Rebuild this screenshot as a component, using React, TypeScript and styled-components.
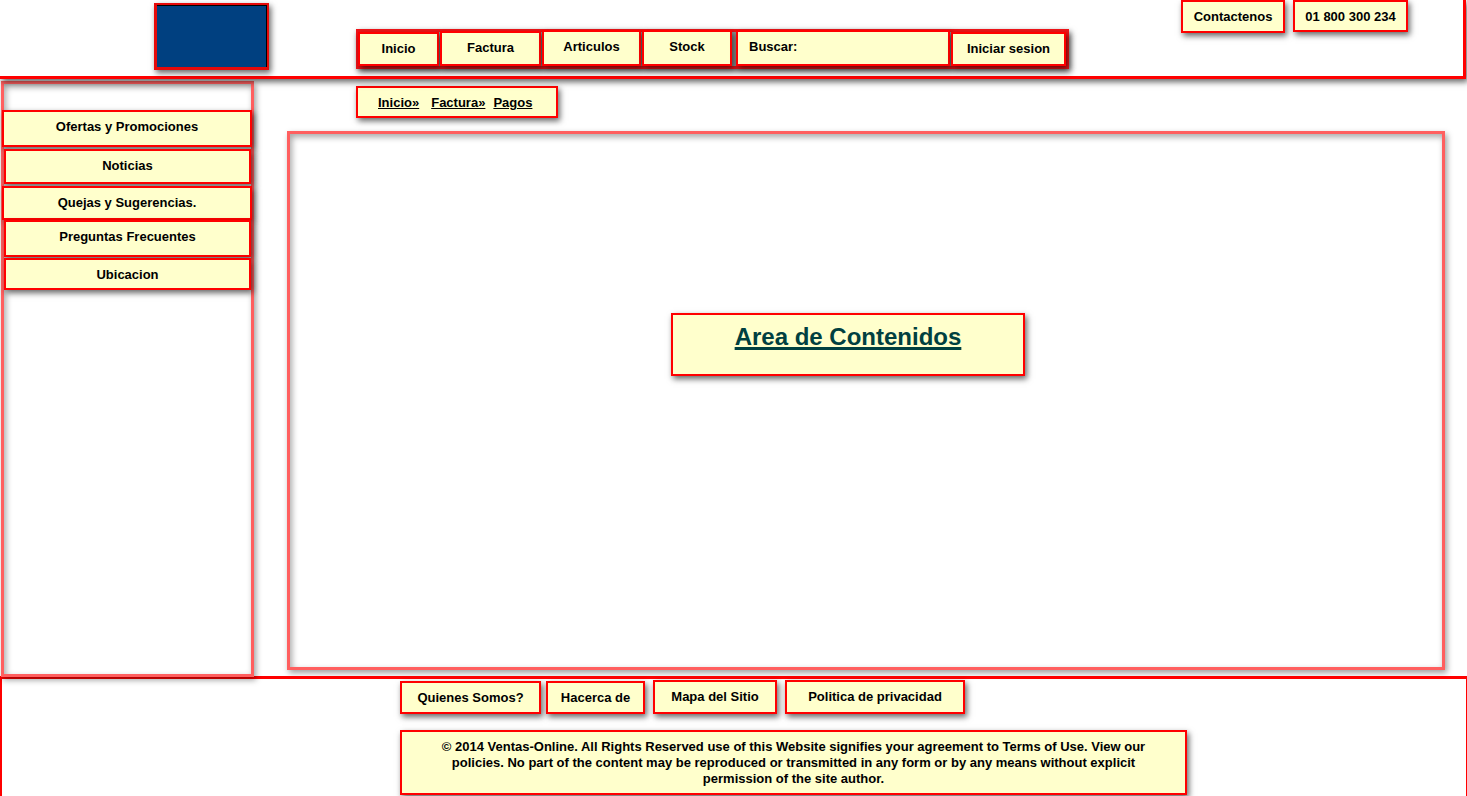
import React from "react";
import styled, { createGlobalStyle, css } from "styled-components";

const red = "#ff0000";
const cream = "#ffffcc";
const shadow = "2px 3px 6px rgba(0, 0, 0, 0.6)";

const GlobalStyle = createGlobalStyle`
  *, *::before, *::after { box-sizing: border-box; }
  body {
    margin: 0;
    background: #ffffff;
    color: #000000;
    font: bold 13px/16px "Liberation Sans", Arial, sans-serif;
  }
  ul, ol { list-style: none; margin: 0; padding: 0; }
`;

const Page = styled.div`
  display: flex;
  flex-direction: column;
  min-height: 100vh;
`;

const note = css`
  border: 2px solid ${red};
  background: ${cream};
  box-shadow: ${shadow};
  color: inherit;
  font: inherit;
`;

const NoteButton = styled.button<{ $width?: number; $height: number }>`
  ${note}
  display: flex;
  justify-content: center;
  align-items: flex-start;
  flex: none;
  width: ${(p) => (p.$width ? `${p.$width}px` : "100%")};
  height: ${(p) => p.$height}px;
  padding: 7px 0 0;
  white-space: nowrap;
  cursor: pointer;
`;

const Header = styled.header`
  position: relative;
  z-index: 1;
  display: flex;
  align-items: flex-start;
  min-height: 79px;
  margin-right: 1px;
  padding: 0 55px 0 154px;
  border: solid ${red};
  border-width: 0 3px 3px 0;
  box-shadow: ${shadow};
`;

const Logo = styled.div`
  flex: none;
  width: 115px;
  height: 67px;
  margin-top: 3px;
  border: solid #e60a0a;
  border-width: 2px 2px 3px 3px;
  background: #004080;
  box-shadow: inset -1px 1px 0 #000000, ${shadow};
`;

const Nav = styled.nav`
  flex: none;
  height: 40px;
  margin: 29px 0 0 87px;
  border: 3px solid #f01418;
  background: #999999;
  box-shadow: ${shadow};
`;

const NavBar = styled.div`
  display: flex;
  align-items: flex-end;
  gap: 1px;
  height: 36px;
  margin: -2px 0 0 -1px;
`;

const Search = styled.label`
  ${note}
  display: flex;
  align-items: flex-start;
  gap: 4px;
  width: 214px;
  height: 36px;
  margin-left: 3px;
  padding: 7px 11px 0;
`;

const SearchInput = styled.input`
  flex: 1;
  min-width: 0;
  height: 16px;
  padding: 0;
  border: 0;
  outline: 0;
  background: transparent;
  font: inherit;
`;

const Contact = styled.div`
  display: flex;
  gap: 8px;
  margin-left: auto;
`;

const Body = styled.div`
  display: flex;
  flex: 1;
`;

const frame = css`
  border: 3px solid #ff5f5f;
  box-shadow: 2px 3px 6px rgba(0, 0, 0, 0.38),
    inset 2px 3px 6px rgba(0, 0, 0, 0.35);
`;

const Sidebar = styled.aside`
  ${frame}
  position: relative;
  flex: none;
  width: 253px;
  margin: 2px 0 -1px 1px;
`;

const SideList = styled.ul`
  margin: 26px -1px 0 -2px;
`;

const SideItem = styled.li<{ $inset: boolean; $gap: number }>`
  padding: ${(p) => (p.$inset ? "0 1px 0 2px" : "0")};
  margin-bottom: ${(p) => p.$gap}px;
`;

const Column = styled.div`
  display: flex;
  flex: 1;
  flex-direction: column;
  min-width: 0;
  padding: 7px 22px 6px 33px;
`;

const Breadcrumb = styled.nav`
  ${note}
  width: 202px;
  height: 32px;
  margin: 0 0 13px 69px;
  padding: 7px 0 0 20px;
`;

const Crumbs = styled.ol`
  display: flex;
`;

const Crumb = styled.li<{ $gap: number }>`
  margin-right: ${(p) => p.$gap}px;
`;

const CrumbLink = styled.a`
  color: inherit;
  text-decoration: underline;
`;

const Content = styled.main`
  ${frame}
  flex: 1;
  padding: 179px 36px 20px 0;
`;

const Title = styled.h1`
  ${note}
  width: 354px;
  height: 63px;
  margin: 0 auto;
  padding: 8px 0;
  color: #004040;
  font-size: 24px;
  line-height: 28px;
  text-align: center;
  text-decoration: underline;
  text-decoration-thickness: 3px;
`;

const Footer = styled.footer`
  padding: 1px 20px 1px 398px;
  border: solid ${red};
  border-width: 3px 1px 0 2px;
`;

const FooterLinks = styled.ul`
  display: flex;
  align-items: flex-end;
  gap: 8px;
  margin-bottom: 16px;
`;

const LinkPair = styled.li`
  display: flex;
  gap: 5px;
`;

const Copyright = styled.p`
  ${note}
  max-width: 787px;
  margin: 0;
  padding: 7px 28px 6px;
  text-align: center;
`;

const sections = [
  { label: "Ofertas y Promociones", height: 37, gap: 2, inset: false },
  { label: "Noticias", height: 35, gap: 2, inset: true },
  { label: "Quejas y Sugerencias.", height: 34, gap: 0, inset: false },
  { label: "Preguntas Frecuentes", height: 37, gap: 1, inset: true },
  { label: "Ubicacion", height: 32, gap: 0, inset: true },
];

const crumbs = [
  { label: "Inicio»", gap: 12 },
  { label: "Factura»", gap: 8 },
  { label: "Pagos", gap: 0 },
];

export default function App() {
  return (
    <Page>
      <GlobalStyle />
      <Header>
        <Logo />
        <Nav>
          <NavBar>
            <NoteButton $width={81} $height={34}>Inicio</NoteButton>
            <NoteButton $width={101} $height={35}>Factura</NoteButton>
            <NoteButton $width={99} $height={36}>Articulos</NoteButton>
            <NoteButton $width={90} $height={36}>Stock</NoteButton>
            <Search>
              Buscar:
              <SearchInput type="text" />
            </Search>
            <NoteButton $width={115} $height={34}>Iniciar sesion</NoteButton>
          </NavBar>
        </Nav>
        <Contact>
          <NoteButton $width={104} $height={33}>Contactenos</NoteButton>
          <NoteButton $width={115} $height={32}>01 800 300 234</NoteButton>
        </Contact>
      </Header>
      <Body>
        <Sidebar>
          <SideList>
            {sections.map((s) => (
              <SideItem key={s.label} $inset={s.inset} $gap={s.gap}>
                <NoteButton $height={s.height}>{s.label}</NoteButton>
              </SideItem>
            ))}
          </SideList>
        </Sidebar>
        <Column>
          <Breadcrumb>
            <Crumbs>
              {crumbs.map((c) => (
                <Crumb key={c.label} $gap={c.gap}>
                  <CrumbLink href="#">{c.label}</CrumbLink>
                </Crumb>
              ))}
            </Crumbs>
          </Breadcrumb>
          <Content>
            <Title>Area de Contenidos</Title>
          </Content>
        </Column>
      </Body>
      <Footer>
        <FooterLinks>
          <LinkPair>
            <NoteButton $width={141} $height={33}>Quienes Somos?</NoteButton>
            <NoteButton $width={99} $height={33}>Hacerca de</NoteButton>
          </LinkPair>
          <li>
            <NoteButton $width={124} $height={34}>Mapa del Sitio</NoteButton>
          </li>
          <li>
            <NoteButton $width={180} $height={34}>Politica de privacidad</NoteButton>
          </li>
        </FooterLinks>
        <Copyright>
          © 2014 Ventas-Online. All Rights Reserved use of this Website signifies
          your agreement to Terms of Use. View our policies. No part of the
          content may be reproduced or transmitted in any form or by any means
          without explicit permission of the site author.
        </Copyright>
      </Footer>
    </Page>
  );
}
